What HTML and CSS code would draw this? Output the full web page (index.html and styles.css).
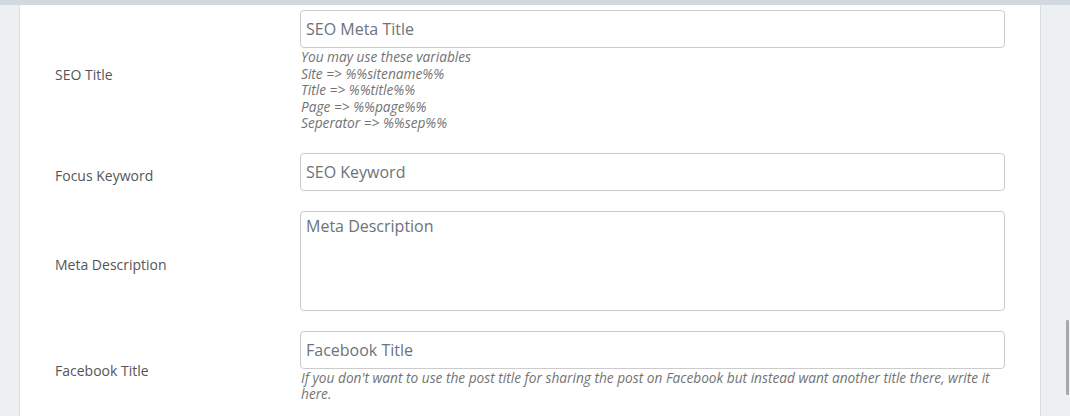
FILE: index.html
```html
<!DOCTYPE html>
<html>
<head>
<meta charset="utf-8">
<link rel="stylesheet" href="styles.css">
</head>
<body>
<div class="topbar"></div>
<div class="page">
  <div class="card">
    <div class="row">
      <label class="label">SEO Title</label>
      <div class="field">
        <input class="input" type="text" placeholder="SEO Meta Title">
        <div class="help">You may use these variables<br>Site =&gt; %%sitename%%<br>Title =&gt; %%title%%<br>Page =&gt; %%page%%<br>Seperator =&gt; %%sep%%</div>
      </div>
    </div>
    <div class="row">
      <label class="label">Focus Keyword</label>
      <div class="field">
        <input class="input" type="text" placeholder="SEO Keyword">
      </div>
    </div>
    <div class="row">
      <label class="label">Meta Description</label>
      <div class="field">
        <textarea class="input textarea" placeholder="Meta Description"></textarea>
      </div>
    </div>
    <div class="row">
      <label class="label">Facebook Title</label>
      <div class="field">
        <input class="input" type="text" placeholder="Facebook Title">
        <div class="help">If you don't want to use the post title for sharing the post on Facebook but instead want another title there, write it here.</div>
      </div>
    </div>
  </div>
  <div class="scroll"><div class="thumb"></div></div>
</div>
</body>
</html>
```
FILE: styles.css
```css
html, body {
  margin: 0;
  padding: 0;
  height: 100%;
  overflow: hidden;
}
body {
  background: #ecf0f1;
  font-family: "Open Sans", "Liberation Sans", sans-serif;
}
.topbar {
  height: 5px;
  background: #d2d9e0;
}
.page {
  display: flex;
  padding-left: 19px;
  height: calc(100% - 5px);
}
.card {
  width: 950px;
  background: #fff;
  border-left: 1px solid #d6dce2;
  border-right: 1px solid #d6dce2;
  padding: 5px 35px 0 35px;
  display: flex;
  flex-direction: column;
  gap: 20px;
}
.row {
  display: grid;
  grid-template-columns: 245px 705px;
}
.label {
  align-self: center;
  padding-top: 7px;
  font-size: 14px;
  color: #555;
}
.field {
  display: flex;
  flex-direction: column;
}
.input {
  box-sizing: border-box;
  width: 705px;
  height: 38px;
  border: 1px solid #cccccc;
  border-radius: 4px;
  padding: 0 5px;
  font-family: "Open Sans", sans-serif;
  font-size: 16px;
  color: #555;
  background: #fff;
  margin: 0;
}
.input::placeholder {
  color: #6c737a;
}
.textarea {
  height: 100px;
  padding: 3px 5px;
  resize: none;
  display: block;
}
.help {
  font-size: 13.7px;
  font-style: italic;
  line-height: 16.5px;
  color: #737373;
  padding-left: 1px;
  padding-top: 1px;
  padding-bottom: 1px;
}
.scroll {
  flex: 1;
  display: flex;
  justify-content: flex-end;
  padding-top: 315px;
  padding-right: 1px;
}
.thumb {
  width: 3px;
  height: 75px;
  background: #a9a9a9;
  border-radius: 1px;
}
```
